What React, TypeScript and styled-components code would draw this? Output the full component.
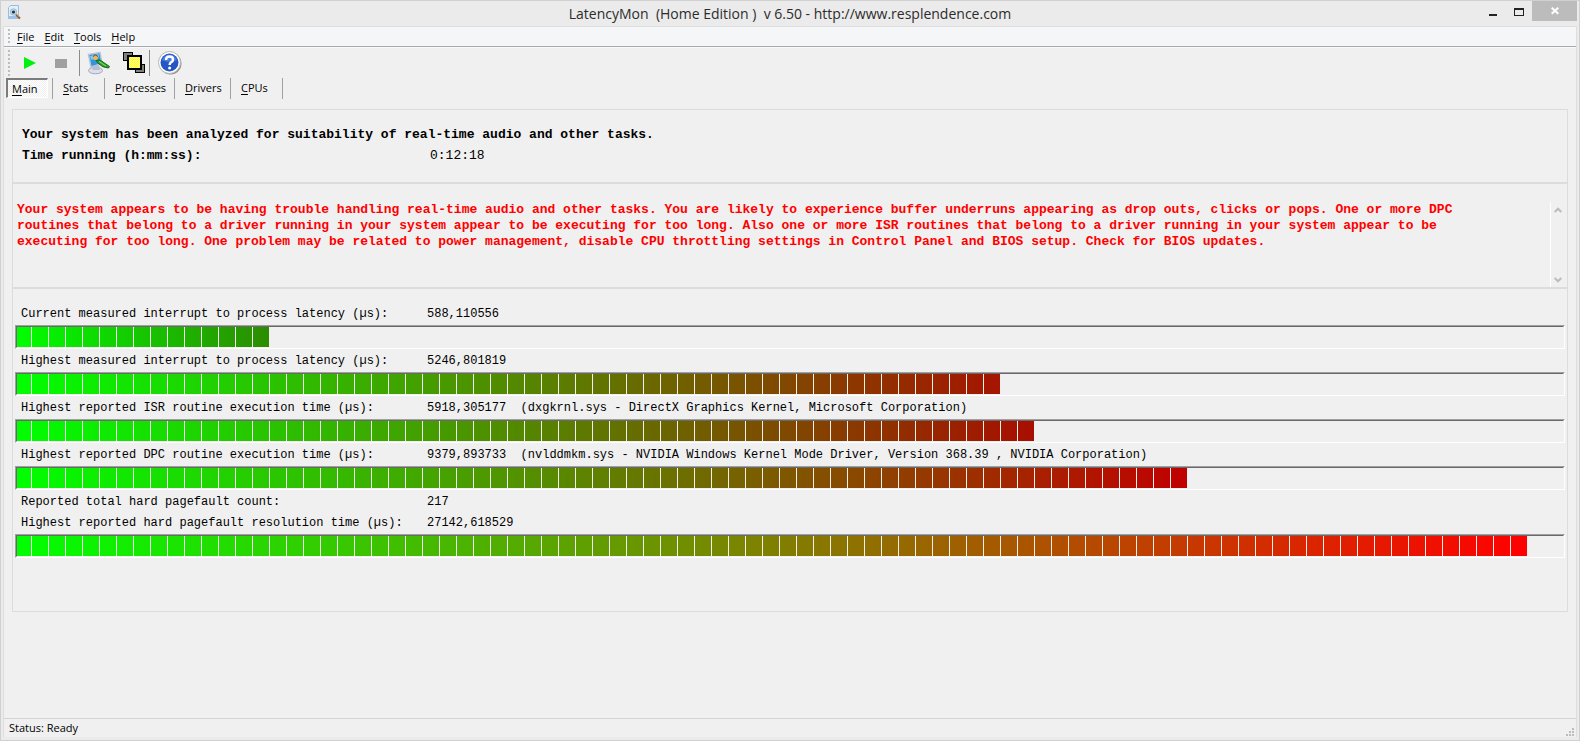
import React from "react";
import styled, { createGlobalStyle } from "styled-components";

const GlobalStyle = createGlobalStyle`
  * { box-sizing: border-box; }
  body { margin: 0; background: #ebebeb; color: #000; }
  button { font: inherit; color: inherit; background: none; border: 0; margin: 0; padding: 0; }
  p, h1 { margin: 0; font-weight: inherit; }
`;

const UI = `"Open Sans", "Noto Sans", sans-serif`;
const MONO = `"Liberation Mono", "DejaVu Sans Mono", monospace`;

const Window = styled.div`
  min-height: 100vh;
  display: flex;
  flex-direction: column;
  background: #ebebeb;
  border: 1px solid #d0d0d0;
  padding: 0 2px 3px;
`;

const TitleBar = styled.header`
  height: 25px;
  display: grid;
  grid-template-columns: 1fr auto 1fr;
  align-items: start;
  font-family: ${UI};
`;

const AppIcon = styled.svg`
  width: 16px;
  height: 16px;
  margin: 4px 0 0 4px;
`;

const Title = styled.h1`
  font-size: 14px;
  line-height: 26px;
  color: #2b2b2b;
  white-space: pre;
`;

const WindowButtons = styled.div`
  display: flex;
  justify-content: flex-end;
`;

const WindowButton = styled.button<{ $close?: boolean }>`
  width: ${(p) => (p.$close ? 45 : 26)}px;
  height: ${(p) => (p.$close ? 20 : 22)}px;
  display: flex;
  align-items: center;
  justify-content: center;
  background: ${(p) => (p.$close ? "#bcbcbc" : "transparent")};
`;

const Client = styled.div`
  flex: 1;
  display: flex;
  flex-direction: column;
  background: #f0f0f0;
  border: 1px solid #dedede;
  border-bottom: 0;
`;

const MenuBar = styled.nav`
  height: 20px;
  display: flex;
  align-items: center;
  gap: 10px;
  padding-left: 4px;
  background: #f5f6f8;
  border-bottom: 1px solid #a8abae;
  font: 11px/18px ${UI};
`;

const Grip = styled.span<{ $end?: number }>`
  width: 2px;
  align-self: stretch;
  margin: 2px ${(p) => p.$end ?? 0}px 1px 0;
  background: repeating-linear-gradient(#bdbdbd 0 2px, transparent 2px 4px);
`;

const Key = styled.span`
  text-decoration: underline;
  text-underline-offset: 2px;
`;

const ToolBar = styled.div`
  height: 31px;
  display: flex;
  align-items: center;
  padding-left: 4px;
  border-top: 1px solid #fafafa;
`;

const ToolButton = styled.button<{ $w: number }>`
  width: ${(p) => p.$w}px;
  height: 26px;
  display: flex;
  align-items: center;
  justify-content: center;
`;

const ToolDivider = styled.span`
  width: 1px;
  height: 26px;
  background: #8c8c8c;
`;

const TabStrip = styled.div`
  height: 21px;
  display: flex;
  padding-left: 2px;
  font: 11px/20px ${UI};
`;

const Tab = styled.button<{ $w: number; $active?: boolean }>`
  width: ${(p) => p.$w}px;
  height: 20px;
  padding: ${(p) => (p.$active ? "0 0 0 4px" : "0 0 0 10px")};
  text-align: left;
  border: solid;
  border-width: ${(p) => (p.$active ? "2px 1px 1px 2px" : "0")};
  border-color: #7c7c7c #fff #fff #7c7c7c;
  line-height: ${(p) => (p.$active ? 17 : 18)}px;
  background: ${(p) =>
    p.$active ? "repeating-conic-gradient(#fff 0 25%, #f0f0f0 0 50%) 0 0 / 2px 2px" : "none"};
`;

const TabDivider = styled.span<{ $gap?: number }>`
  width: 1px;
  margin-left: ${(p) => p.$gap ?? 0}px;
  background: #a0a0a0;
`;

const Panel = styled.main`
  margin: 10px 8px 0;
  border: 1px solid #dcdcdc;
  font-family: ${MONO};
`;

const Summary = styled.section`
  padding: 14px 9px 16px;
  border-bottom: 2px solid #dcdcdc;
  font-size: 13px;
  font-weight: 700;
  line-height: 21px;
`;

const SummaryRow = styled.div`
  display: grid;
  grid-template-columns: 408px 1fr;
`;

const Plain = styled.span`
  font-weight: 400;
`;

const Verdict = styled.section`
  display: flex;
  padding-top: 18px;
  min-height: 105px;
  border-bottom: 2px solid #dcdcdc;
`;

const VerdictText = styled.p`
  flex: 1;
  padding: 0 64px 0 4px;
  font-size: 13px;
  font-weight: 700;
  line-height: 16px;
  color: #f00;
`;

const ScrollTrack = styled.div`
  width: 17px;
  padding-right: 2px;
  border-left: 1px solid #fff;
  display: flex;
  flex-direction: column;
  justify-content: space-between;
`;

const ScrollButton = styled.button`
  height: 15px;
  display: flex;
  align-items: center;
  justify-content: center;
`;

const Measurements = styled.section`
  padding: 13px 2px 53px;
  font-size: 12px;
`;

const Reading = styled.div<{ $h?: number }>`
  height: ${(p) => p.$h ?? 23}px;
  display: grid;
  grid-template-columns: 406px 1fr;
  padding-left: 6px;
  line-height: 25px;
  white-space: pre;
`;

const Track = styled.div`
  height: 24px;
  border: 1px solid;
  border-color: #a0a0a0 #fff #fff #a0a0a0;
`;

const TrackInner = styled.div`
  height: 22px;
  border: 1px solid;
  border-color: #696969 #f0f0f0 #f0f0f0 #696969;
`;

const Fill = styled.div<{ $to: string }>`
  height: 20px;
  max-width: 100%;
  background:
    repeating-linear-gradient(90deg, transparent 0 16px, #f0f0f0 16px 17px) -2px 0,
    linear-gradient(90deg, #00ff00, ${(p) => p.$to});
`;

const StatusBar = styled.footer`
  height: 19px;
  margin-top: auto;
  display: flex;
  justify-content: space-between;
  align-items: flex-end;
  padding: 0 2px 1px 5px;
  border-top: 1px solid #d4d4d4;
  font: 11px/16px ${UI};
`;

const SEGMENT = 17;

function Meter({ label, segments, to }: { label: string; segments: number; to: string }) {
  return (
    <Track role="meter" aria-label={label} aria-valuemin={0} aria-valuemax={91} aria-valuenow={segments}>
      <TrackInner>
        <Fill $to={to} style={{ width: segments * SEGMENT - 3 }} />
      </TrackInner>
    </Track>
  );
}

type Row = { label: string; value: string; segments?: number; to?: string; h?: number };

const rows: Row[] = [
  { label: "Current measured interrupt to process latency (µs):", value: "588,110556", segments: 15, to: "#2c8c00" },
  { label: "Highest measured interrupt to process latency (µs):", value: "5246,801819", segments: 58, to: "#a51400" },
  {
    label: "Highest reported ISR routine execution time (µs):",
    value: "5918,305177  (dxgkrnl.sys - DirectX Graphics Kernel, Microsoft Corporation)",
    segments: 60,
    to: "#a80e00",
  },
  {
    label: "Highest reported DPC routine execution time (µs):",
    value: "9379,893733  (nvlddmkm.sys - NVIDIA Windows Kernel Mode Driver, Version 368.39 , NVIDIA Corporation)",
    segments: 69,
    to: "#c00000",
  },
  { label: "Reported total hard pagefault count:", value: "217", h: 21 },
  { label: "Highest reported hard pagefault resolution time (µs):", value: "27142,618529", segments: 89, to: "#ff0000" },
];

const menus = ["File", "Edit", "Tools", "Help"];
const tabs = [
  { name: "Stats", w: 51 },
  { name: "Processes", w: 69 },
  { name: "Drivers", w: 55 },
  { name: "CPUs", w: 51 },
];

const Mnemonic = ({ text }: { text: string }) => (
  <span>
    <Key>{text[0]}</Key>
    {text.slice(1)}
  </span>
);

const LensIcon = () => (
  <AppIcon viewBox="0 0 16 16" aria-hidden="true">
    <path d="M1.500 2.500L3.500.500H11.500V13.500H1.500Z" fill="#e3effa" stroke="#9dbbdc" />
    <path d="M1 11H12V14H1Z" fill="#9cc0e6" />
    <circle cx="6.500" cy="7" r="3.200" fill="#b9dbef" stroke="#a5b9c9" />
    <circle cx="6.500" cy="7" r="1.600" fill="#173447" />
    <path d="M9 9.500L13 13.500" stroke="#8a5a30" strokeWidth="2" />
    <path d="M9.500 9L13 12.500" stroke="#edb56f" strokeWidth="1" />
  </AppIcon>
);

const MonitorIcon = () => (
  <svg width="24" height="24" viewBox="0 0 24 24" aria-hidden="true">
    <ellipse cx="8.500" cy="19.500" rx="7" ry="3.300" fill="#dcdeea" stroke="#a3a7bc" />
    <path d="M5.500 14H12L13 19H5.500Z" fill="#b9bdd2" />
    <path d="M1.500 3.500L13 1.500L15 12.500L4 16Z" fill="#2f95dc" stroke="#b4c4dc" strokeWidth="1.500" />
    <path d="M3 5L11.500 3L12 6L4 9Z" fill="#7cc8f4" />
    <circle cx="8.500" cy="6.500" r="2.600" fill="#f0b45a" />
    <path d="M6 5.500Q8.500 2.500 11 5.500" fill="none" stroke="#6b4a1d" />
    <path d="M9 9.500L13 9L22.500 15.500L21.500 17Q15 16.500 12 13Z" fill="#2da02d" stroke="#14691c" />
    <path d="M12 10.500L19 15" stroke="#8be069" />
  </svg>
);

const StackIcon = () => (
  <svg width="22" height="22" viewBox="0 0 22 22" shapeRendering="crispEdges" aria-hidden="true">
    <defs>
      <pattern id="dither" width="2" height="2" patternUnits="userSpaceOnUse">
        <rect width="2" height="2" fill="#ffff00" />
        <rect width="1" height="1" fill="#fff9b0" />
        <rect x="1" y="1" width="1" height="1" fill="#fff9b0" />
      </pattern>
    </defs>
    <rect x=".5" y=".5" width="9" height="8" fill="#808080" stroke="#000" />
    <rect x="12.500" y="12.500" width="9" height="8" fill="#808080" stroke="#000" />
    <rect x="5" y="4" width="13" height="13" fill="url(#dither)" stroke="#000" strokeWidth="2" />
  </svg>
);

const HelpIcon = () => (
  <svg width="24" height="24" viewBox="0 0 24 24" aria-hidden="true">
    <circle cx="12.500" cy="12.500" r="11" fill="#8e8e8e" />
    <circle cx="11.500" cy="11.500" r="11" fill="#fff" stroke="#b5b5b5" strokeWidth="1" />
    <circle cx="11.500" cy="11.500" r="9" fill="#2556c4" />
    <path d="M4 9A8 8 0 0 1 19 9Q12 13 4 9Z" fill="#4c7ee0" />
    <path d="M8 9Q8 5.500 11.500 5.500Q15 5.500 15 8.500Q15 10.300 13.200 11.300Q11.600 12.200 11.600 14" fill="none" stroke="#fff" strokeWidth="2.400" />
    <circle cx="11.600" cy="17" r="1.500" fill="#fff" />
  </svg>
);

const Chevron = ({ down }: { down?: boolean }) => (
  <svg width="8" height="6" viewBox="0 0 8 6" aria-hidden="true">
    <path d={down ? "M.7 1L4 4.300L7.300 1" : "M.7 5L4 1.700L7.300 5"} fill="none" stroke="#bcbcbc" strokeWidth="2" />
  </svg>
);

export default function App() {
  return (
    <>
      <GlobalStyle />
      <Window>
        <TitleBar>
          <LensIcon />
          <Title>{"LatencyMon  (Home Edition )  v 6.50 - http://www.resplendence.com"}</Title>
          <WindowButtons>
            <WindowButton aria-label="Minimize">
              <svg width="8" height="10" shapeRendering="crispEdges">
                <rect y="7" width="8" height="2" fill="#222228" />
              </svg>
            </WindowButton>
            <WindowButton aria-label="Maximize">
              <svg width="10" height="8" shapeRendering="crispEdges">
                <path d="M0 0H10V8H0ZM1 2V7H9V2Z" fill="#222228" fillRule="evenodd" />
              </svg>
            </WindowButton>
            <WindowButton $close aria-label="Close">
              <svg width="8" height="8">
                <path d="M.7.7L7.300 6.800M7.300.7L.7 6.800" stroke="#fff" strokeWidth="2" />
              </svg>
            </WindowButton>
          </WindowButtons>
        </TitleBar>
        <Client>
          <MenuBar>
            <Grip $end={-3} />
            {menus.map((m) => (
              <button key={m}>
                <Mnemonic text={m} />
              </button>
            ))}
          </MenuBar>
          <ToolBar>
            <Grip $end={4} />
            <ToolButton $w={32} aria-label="Start">
              <svg width="12" height="12">
                <path d="M0 0L12 6L0 12Z" fill="#00f010" />
              </svg>
            </ToolButton>
            <ToolButton $w={30} aria-label="Stop">
              <svg width="12" height="9">
                <rect width="12" height="9" fill="#a0a0a0" />
              </svg>
            </ToolButton>
            <ToolButton $w={3} as="span" />
            <ToolDivider />
            <ToolButton $w={38} aria-label="Monitor">
              <MonitorIcon />
            </ToolButton>
            <ToolButton $w={31} aria-label="Windows">
              <StackIcon />
            </ToolButton>
            <ToolDivider />
            <ToolButton $w={40} aria-label="Help">
              <HelpIcon />
            </ToolButton>
          </ToolBar>
          <TabStrip role="tablist">
            <Tab $w={42} $active role="tab" aria-selected>
              <Mnemonic text="Main" />
            </Tab>
            <TabDivider $gap={4} />
            {tabs.map((t) => (
              <React.Fragment key={t.name}>
                <Tab $w={t.w} role="tab" aria-selected={false}>
                  <Mnemonic text={t.name} />
                </Tab>
                <TabDivider />
              </React.Fragment>
            ))}
          </TabStrip>
          <Panel>
            <Summary>
              <p>Your system has been analyzed for suitability of real-time audio and other tasks.</p>
              <SummaryRow>
                <span>Time running (h:mm:ss):</span>
                <Plain>0:12:18</Plain>
              </SummaryRow>
            </Summary>
            <Verdict>
              <VerdictText>
                Your system appears to be having trouble handling real-time audio and other tasks. You are likely to
                experience buffer underruns appearing as drop outs, clicks or pops. One or more DPC routines that belong
                to a driver running in your system appear to be executing for too long. Also one or more ISR routines
                that belong to a driver running in your system appear to be executing for too long. One problem may be
                related to power management, disable CPU throttling settings in Control Panel and BIOS setup. Check for
                BIOS updates.
              </VerdictText>
              <ScrollTrack>
                <ScrollButton aria-label="Scroll up">
                  <Chevron />
                </ScrollButton>
                <ScrollButton aria-label="Scroll down">
                  <Chevron down />
                </ScrollButton>
              </ScrollTrack>
            </Verdict>
            <Measurements>
              {rows.map((r) => (
                <React.Fragment key={r.label}>
                  <Reading $h={r.h}>
                    <span>{r.label}</span>
                    <span>{r.value}</span>
                  </Reading>
                  {r.segments && r.to && <Meter label={r.label} segments={r.segments} to={r.to} />}
                </React.Fragment>
              ))}
            </Measurements>
          </Panel>
          <StatusBar>
            <span>Status: Ready</span>
            <svg width="8" height="8" shapeRendering="crispEdges" aria-hidden="true">
              <path d="M6 0h2v2h-2zM3 3h2v2h-2zM6 3h2v2h-2zM0 6h2v2h-2zM3 6h2v2h-2zM6 6h2v2h-2z" fill="#bcbcbc" />
            </svg>
          </StatusBar>
        </Client>
      </Window>
    </>
  );
}
